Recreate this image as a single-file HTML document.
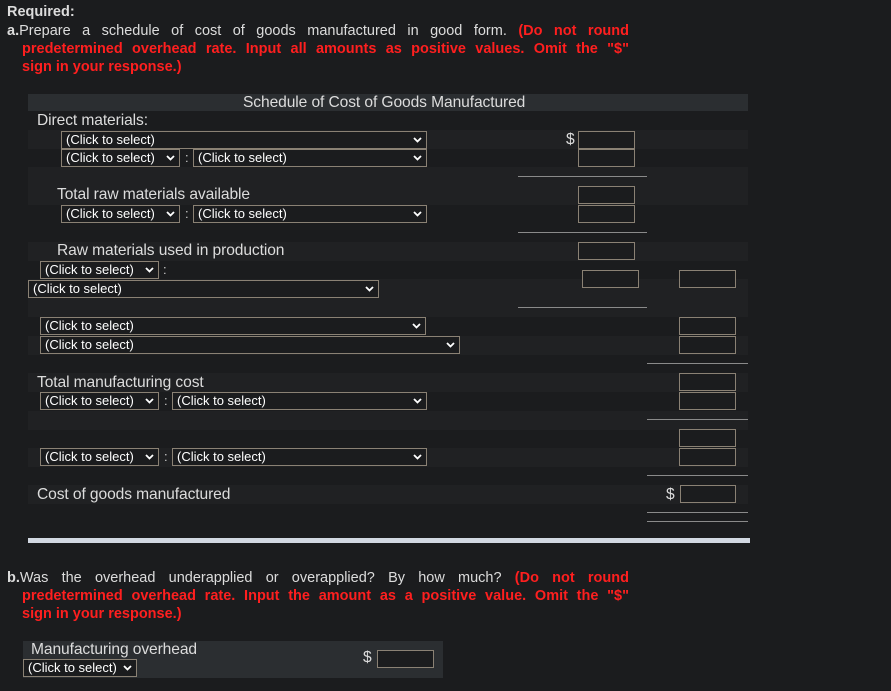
<!DOCTYPE html>
<html><head><meta charset="utf-8"><style>
*{margin:0;padding:0;box-sizing:border-box}
body{width:891px;height:691px;background:#1b1c1e;position:relative;overflow:hidden;font-family:"Liberation Sans",Arial,sans-serif;color:#d9d9d9}
.a{position:absolute}
.row{position:absolute;left:28px;width:720px;height:19px}
.l{background:#202123}
.sel{position:absolute;height:18px;border:1px solid #8a8174;background:#1b1c1e;color:#fff;font-size:13px;line-height:16px;padding-left:4px;white-space:nowrap}
.sel svg{position:absolute;right:4px;top:5px}
.in{position:absolute;width:57px;height:18px;border:1px solid #8a8174;background:#1b1c1e}
.hl{position:absolute;height:1px;background:#8a8a8a}
.t{position:absolute;font-size:15.6px;color:#dcdcdc;white-space:nowrap;letter-spacing:-0.1px}
.red{color:#ff1f1f;font-weight:bold}
.p{position:absolute;font-size:14.5px;line-height:18px;text-align:justify;text-align-last:justify;color:#dcdcdc;white-space:nowrap}
.c{position:absolute;font-size:13px;color:#ccc}
</style></head><body>
<div class="a" style="left:7px;top:4px;font-size:14.5px;font-weight:bold;color:#dcdcdc">Required:</div>
<div class="p" style="left:7px;top:22px;width:622px;white-space:normal"><b>a.</b>Prepare a schedule of cost of goods manufactured in good form. <span class="red">(Do not round</span></div>
<div class="p red" style="left:22px;top:40px;width:607px;color:#ff1f1f;white-space:normal">predetermined overhead rate. Input all amounts as positive values. Omit the "$"</div>
<div class="p red" style="left:22px;top:58px;color:#ff1f1f;text-align-last:left">sign in your response.)</div>

<div class="row" style="top:94px;height:17px;background:#2b2e31"></div>
<div class="t" style="left:243px;top:94px">Schedule of Cost of Goods Manufactured</div>
<div class="row l" style="top:130px"></div>
<div class="row l" style="top:167px"></div>
<div class="row l" style="top:186px"></div>
<div class="row l" style="top:242px"></div>
<div class="row l" style="top:279px"></div>
<div class="row l" style="top:298px"></div>
<div class="row l" style="top:336px"></div>
<div class="row l" style="top:373px"></div>
<div class="row l" style="top:411px"></div>
<div class="row l" style="top:448px"></div>
<div class="row l" style="top:485px"></div>

<div class="t" style="left:37px;top:112px">Direct materials:</div>
<div class="sel" style="left:61px;top:131px;width:366px">(Click to select)<svg width="9" height="6"><path d="M1 1l3.5 3.5L8 1" stroke="#fff" stroke-width="1.8" fill="none"/></svg></div>
<div class="t" style="left:566px;top:131px">$</div>
<div class="in" style="left:578px;top:131px"></div>
<div class="sel" style="left:61px;top:149px;width:119px">(Click to select)<svg width="9" height="6"><path d="M1 1l3.5 3.5L8 1" stroke="#fff" stroke-width="1.8" fill="none"/></svg></div>
<div class="c" style="left:185px;top:150px">:</div>
<div class="sel" style="left:193px;top:149px;width:234px">(Click to select)<svg width="9" height="6"><path d="M1 1l3.5 3.5L8 1" stroke="#fff" stroke-width="1.8" fill="none"/></svg></div>
<div class="in" style="left:578px;top:149px"></div>
<div class="hl" style="left:518px;top:176px;width:129px"></div>

<div class="t" style="left:57px;top:186px">Total raw materials available</div>
<div class="in" style="left:578px;top:186px"></div>
<div class="sel" style="left:61px;top:205px;width:119px">(Click to select)<svg width="9" height="6"><path d="M1 1l3.5 3.5L8 1" stroke="#fff" stroke-width="1.8" fill="none"/></svg></div>
<div class="c" style="left:185px;top:206px">:</div>
<div class="sel" style="left:193px;top:205px;width:234px">(Click to select)<svg width="9" height="6"><path d="M1 1l3.5 3.5L8 1" stroke="#fff" stroke-width="1.8" fill="none"/></svg></div>
<div class="in" style="left:578px;top:205px"></div>
<div class="hl" style="left:518px;top:232px;width:129px"></div>

<div class="t" style="left:57px;top:242px">Raw materials used in production</div>
<div class="in" style="left:578px;top:242px"></div>
<div class="sel" style="left:40px;top:261px;width:119px">(Click to select)<svg width="9" height="6"><path d="M1 1l3.5 3.5L8 1" stroke="#fff" stroke-width="1.8" fill="none"/></svg></div>
<div class="c" style="left:163px;top:262px">:</div>
<div class="in" style="left:582px;top:270px"></div>
<div class="in" style="left:679px;top:270px"></div>
<div class="sel" style="left:28px;top:280px;width:351px">(Click to select)<svg width="9" height="6"><path d="M1 1l3.5 3.5L8 1" stroke="#fff" stroke-width="1.8" fill="none"/></svg></div>
<div class="hl" style="left:518px;top:307px;width:129px"></div>

<div class="sel" style="left:40px;top:317px;width:386px">(Click to select)<svg width="9" height="6"><path d="M1 1l3.5 3.5L8 1" stroke="#fff" stroke-width="1.8" fill="none"/></svg></div>
<div class="in" style="left:679px;top:317px"></div>
<div class="sel" style="left:40px;top:336px;width:420px">(Click to select)<svg width="9" height="6"><path d="M1 1l3.5 3.5L8 1" stroke="#fff" stroke-width="1.8" fill="none"/></svg></div>
<div class="in" style="left:679px;top:336px"></div>
<div class="hl" style="left:647px;top:363px;width:101px"></div>

<div class="t" style="left:37px;top:374px">Total manufacturing cost</div>
<div class="in" style="left:679px;top:373px"></div>
<div class="sel" style="left:40px;top:392px;width:119px">(Click to select)<svg width="9" height="6"><path d="M1 1l3.5 3.5L8 1" stroke="#fff" stroke-width="1.8" fill="none"/></svg></div>
<div class="c" style="left:164px;top:393px">:</div>
<div class="sel" style="left:172px;top:392px;width:255px">(Click to select)<svg width="9" height="6"><path d="M1 1l3.5 3.5L8 1" stroke="#fff" stroke-width="1.8" fill="none"/></svg></div>
<div class="in" style="left:679px;top:392px"></div>
<div class="hl" style="left:647px;top:419px;width:101px"></div>

<div class="in" style="left:679px;top:429px"></div>
<div class="sel" style="left:40px;top:448px;width:119px">(Click to select)<svg width="9" height="6"><path d="M1 1l3.5 3.5L8 1" stroke="#fff" stroke-width="1.8" fill="none"/></svg></div>
<div class="c" style="left:164px;top:449px">:</div>
<div class="sel" style="left:172px;top:448px;width:255px">(Click to select)<svg width="9" height="6"><path d="M1 1l3.5 3.5L8 1" stroke="#fff" stroke-width="1.8" fill="none"/></svg></div>
<div class="in" style="left:679px;top:448px"></div>
<div class="hl" style="left:647px;top:475px;width:101px"></div>

<div class="t" style="left:37px;top:486px">Cost of goods manufactured</div>
<div class="t" style="left:666px;top:486px">$</div>
<div class="in" style="left:680px;top:485px;width:56px"></div>
<div class="hl" style="left:647px;top:512px;width:101px"></div>
<div class="hl" style="left:647px;top:521px;width:101px"></div>

<div class="a" style="left:28px;top:538px;width:722px;height:5px;background:#d2d8e2"></div>

<div class="p" style="left:7px;top:569px;width:622px;white-space:normal"><b>b.</b>Was the overhead underapplied or overapplied? By how much? <span class="red">(Do not round</span></div>
<div class="p red" style="left:22px;top:587px;width:607px;color:#ff1f1f;white-space:normal">predetermined overhead rate. Input the amount as a positive value. Omit the "$"</div>
<div class="p red" style="left:22px;top:605px;color:#ff1f1f;text-align-last:left">sign in your response.)</div>

<div class="a" style="left:23px;top:641px;width:420px;height:37px;background:#2b2e31"></div>
<div class="t" style="left:31px;top:641px">Manufacturing overhead</div>
<div class="sel" style="left:23px;top:659px;width:114px">(Click to select)<svg width="9" height="6"><path d="M1 1l3.5 3.5L8 1" stroke="#fff" stroke-width="1.8" fill="none"/></svg></div>
<div class="t" style="left:363px;top:649px">$</div>
<div class="in" style="left:377px;top:650px"></div>
</body></html>
